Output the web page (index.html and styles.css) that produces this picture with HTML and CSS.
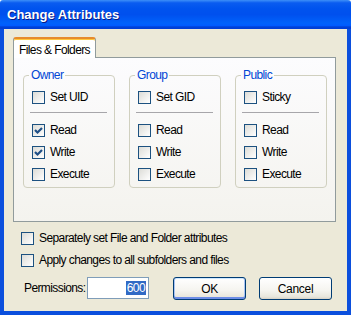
FILE: index.html
```html
<!DOCTYPE html>
<html lang="en">
  <head>
    <meta charset="UTF-8">
    <title>Change Attributes</title>
    <link rel="stylesheet" href="styles.css">
  </head>
  <body>

    <section class="window">
      <div class="titleBar">
        <span class="titleText">Change Attributes</span>
      </div>

      <div class="dialogBody">
        <div class="tabStrip">
          <div class="tab">Files &amp; Folders</div>
        </div>

        <div class="tabPanel">
          <fieldset class="groupBox">
            <legend>Owner</legend>
            <label class="checkRow"><span class="checkBox"></span>Set UID</label>
            <hr class="groupLine">
            <label class="checkRow"><span class="checkBox"><svg viewBox="0 0 11 11"><path d="M2 5 L4.5 7.5 L9 3"/></svg></span>Read</label>
            <label class="checkRow"><span class="checkBox"><svg viewBox="0 0 11 11"><path d="M2 5 L4.5 7.5 L9 3"/></svg></span>Write</label>
            <label class="checkRow"><span class="checkBox"></span>Execute</label>
          </fieldset>

          <fieldset class="groupBox">
            <legend>Group</legend>
            <label class="checkRow"><span class="checkBox"></span>Set GID</label>
            <hr class="groupLine">
            <label class="checkRow"><span class="checkBox"></span>Read</label>
            <label class="checkRow"><span class="checkBox"></span>Write</label>
            <label class="checkRow"><span class="checkBox"></span>Execute</label>
          </fieldset>

          <fieldset class="groupBox">
            <legend>Public</legend>
            <label class="checkRow"><span class="checkBox"></span>Sticky</label>
            <hr class="groupLine">
            <label class="checkRow"><span class="checkBox"></span>Read</label>
            <label class="checkRow"><span class="checkBox"></span>Write</label>
            <label class="checkRow"><span class="checkBox"></span>Execute</label>
          </fieldset>
        </div>

        <div class="options">
          <label class="checkRow"><span class="checkBox"></span>Separately set File and Folder attributes</label>
          <label class="checkRow"><span class="checkBox"></span>Apply changes to all subfolders and files</label>
        </div>

        <div class="bottomRow">
          <span class="permLabel">Permissions:</span>
          <div class="permInput"><span class="selectedText">600</span></div>
          <button class="xpButton defaultButton">OK</button>
          <button class="xpButton">Cancel</button>
        </div>
      </div>
    </section>

  </body>
</html>
```

FILE: styles.css
```css
body {
  margin: 0px;
  font-family: "Liberation Sans", Arial, sans-serif;
  font-size: 12px;
  letter-spacing: -0.6px;
  color: black;
  background-color: white;
}

.window {
  width: 351px;
  height: 315px;
  display: flex;
  flex-direction: column;
}

.titleBar {
  height: 29px;
  box-sizing: border-box;
  padding: 6px 0px 0px 7px;
  background: linear-gradient(#3d8ff8 0%, #0a5cf0 10%, #0053ee 30%, #0050ee 50%, #0062fb 80%, #005bff 88%, #0041d6 93%, #003dd7 100%);
  border-radius: 3px 3px 0px 0px;
}

.titleText {
  font-size: 13px;
  font-weight: bold;
  letter-spacing: 0px;
  line-height: 18px;
  color: white;
  text-shadow: 1px 1px #0a1883;
}

.dialogBody {
  flex: 1;
  background-color: #ece9d8;
  border: 4px solid #0b4fdd;
  border-top: none;
  padding: 8px 11px 0px 9px;
}

.tabStrip {
  display: flex;
  height: 20px;
}

.tab {
  position: relative;
  z-index: 1;
  width: 83px;
  height: 21px;
  box-sizing: border-box;
  padding-top: 3px;
  text-align: center;
  line-height: 16px;
  background-color: white;
  border: 1px solid #919b9c;
  border-top: 2px solid #e68b2c;
  border-bottom: none;
  border-radius: 3px 3px 0px 0px;
  box-shadow: inset 0px 1px #ffc73c;
}

.tabPanel {
  height: 165px;
  box-sizing: border-box;
  border: 1px solid #919b9c;
  padding: 10px 9px 0px 9px;
  background: linear-gradient(#fcfcfe, #f4f3ee);
  display: grid;
  grid-template-columns: 92px 92px 92px;
  column-gap: 14px;
  align-items: start;
}

.groupBox {
  margin: 0px;
  padding: 4px 6px 2px 8px;
  border: 1px solid #d0d0bf;
  border-radius: 4px;
  min-width: 0px;
}

.groupBox legend {
  color: #0046d5;
  line-height: 14px;
  padding: 0px 2px;
  margin-left: -3px;
}

.groupLine {
  border: none;
  border-top: 1px solid #a7a6aa;
  margin: 4px 1px 6px -2px;
}

.checkRow {
  display: flex;
  align-items: center;
  gap: 5px;
  height: 22px;
  white-space: nowrap;
}

.checkBox {
  width: 13px;
  height: 13px;
  box-sizing: border-box;
  border: 1px solid #1c5180;
  background: linear-gradient(135deg, #dcdcd7, #ffffff);
  flex-shrink: 0;
}

.checkBox svg {
  display: block;
  width: 11px;
  height: 11px;
  fill: none;
  stroke: #1f4f86;
  stroke-width: 2.2;
}

.options {
  margin-top: 5px;
  padding-left: 8px;
}

.bottomRow {
  display: flex;
  align-items: flex-start;
  margin-top: 6px;
}

.permLabel {
  width: 63px;
  flex-shrink: 0;
  margin-left: 11px;
  line-height: 22px;
}

.permInput {
  width: 62px;
  height: 22px;
  box-sizing: border-box;
  border: 1px solid #7f9db9;
  background-color: white;
  text-align: right;
  padding: 3px 2px 0px 0px;
}

.selectedText {
  display: inline-block;
  background-color: #316ac5;
  color: white;
  line-height: 14px;
  padding: 0px 1px;
}

.xpButton {
  width: 73px;
  height: 23px;
  margin-left: 13px;
  font-family: inherit;
  font-size: 12px;
  letter-spacing: -0.3px;
  color: black;
  border: 1px solid #003c74;
  border-radius: 3px;
  background: linear-gradient(#ffffff 0%, #f5f4ef 60%, #e8e6dc 90%, #d6d0c5 100%);
  padding: 0px;
}

.defaultButton {
  margin-left: 24px;
  box-shadow: inset 0px -2px #6d8de6, inset 1px 0px #a9c4f3, inset -1px 0px #a9c4f3, inset 0px 1px #cee7ff;
}
```
